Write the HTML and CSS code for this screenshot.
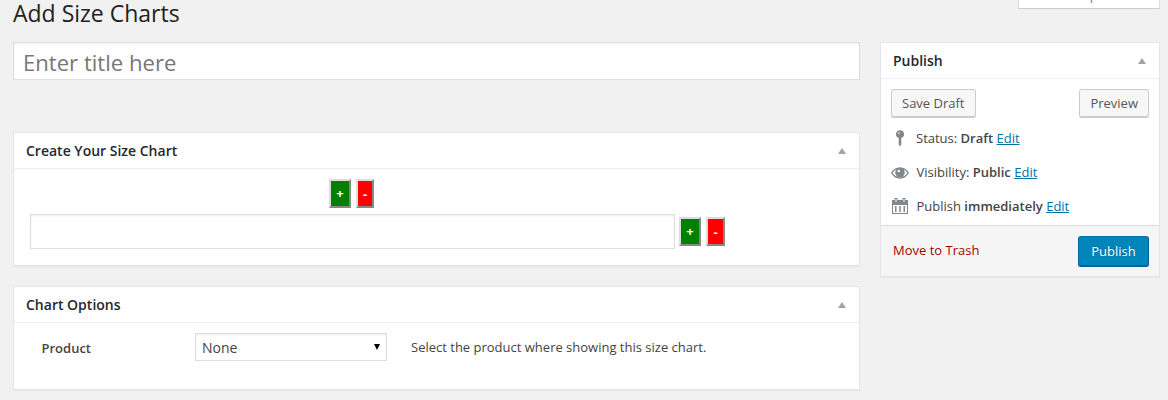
FILE: index.html
```html
<!DOCTYPE html>
<html lang="en">
<head>
<meta charset="utf-8">
<title>Add Size Charts</title>
<link rel="stylesheet" href="styles.css">
</head>
<body>
<div class="page">
  <header class="topbar">
    <h1 class="page-title">Add Size Charts</h1>
    <button class="screen-options">Screen Options</button>
  </header>
  <div class="columns">
    <main class="main">
      <input class="title-input" type="text" placeholder="Enter title here">
      <section class="postbox chart-box">
        <h3 class="postbox-title">Create Your Size Chart<span class="toggle"></span></h3>
        <div class="chart-body">
          <div class="col-actions">
            <button class="cell-btn add">+</button>
            <button class="cell-btn remove">-</button>
          </div>
          <div class="chart-row">
            <input class="cell-input" type="text">
            <button class="cell-btn add">+</button>
            <button class="cell-btn remove wide">-</button>
          </div>
        </div>
      </section>
      <section class="postbox options-box">
        <h3 class="postbox-title">Chart Options<span class="toggle"></span></h3>
        <div class="option-row">
          <span class="option-label">Product</span>
          <div class="select">None<span class="select-arrow"></span></div>
          <span class="option-help">Select the product where showing this size chart.</span>
        </div>
      </section>
    </main>
    <aside class="postbox publish-box">
      <h3 class="postbox-title">Publish<span class="toggle"></span></h3>
      <div class="minor-actions">
        <button class="button">Save Draft</button>
        <button class="button">Preview</button>
      </div>
      <ul class="misc">
        <li class="misc-item">
          <svg class="misc-icon" width="18" height="18" viewBox="0 0 18 18"><path fill="#82878c" d="M9 1.200a4 4 0 0 1 1.300 7.800V15.500L9 17.500l-1.300-2V9A4 4 0 0 1 9 1.200z"/><ellipse cx="7.800" cy="4" rx="1.300" ry="1" fill="#c3c6c9"/></svg>
          <span>Status: <b>Draft</b> <a href="#">Edit</a></span>
        </li>
        <li class="misc-item shifted">
          <svg class="misc-icon" width="18" height="18" viewBox="0 0 18 18"><path fill="#82878c" fill-rule="evenodd" d="M0 10C2 6.500 5.200 4.300 9 4.300s7 2.200 9 5.700c-2 3.500-5.200 5.700-9 5.700S2 13.500 0 10zM1.600 10c1.200 2.300 3.800 4 7.400 4s6.200-1.700 7.400-4C15.500 8.400 14.200 7.200 12.800 6.500c.6 1 1 2 1 3a4.800 4.800 0 0 1-9.600 0c0-1 .4-2 1-3C3.800 7.200 2.500 8.400 1.600 10z"/><circle cx="7.800" cy="8" r="1.300" fill="#fff"/></svg>
          <span>Visibility: <b>Public</b> <a href="#">Edit</a></span>
        </li>
        <li class="misc-item shifted">
          <svg class="misc-icon" width="18" height="18" viewBox="0 0 18 18"><path fill="#82878c" fill-rule="evenodd" d="M1 3h16v14H1zM2 8v8h14V8z"/><path fill="#82878c" d="M3.500 1h3v4h-3zM11.500 1h3v4h-3zM4 9h1.500v6H4zM8.200 9h1.500v6H8.200zM12.500 9H14v6h-1.500z"/><path fill="#fff" d="M4.500 2h1v3h-1zM12.500 2h1v3h-1z"/></svg>
          <span>Publish <b>immediately</b> <a href="#">Edit</a></span>
        </li>
      </ul>
      <div class="major-actions">
        <a class="trash" href="#">Move to Trash</a>
        <button class="button primary">Publish</button>
      </div>
    </aside>
  </div>
</div>
</body>
</html>
```
FILE: styles.css
```css
* { box-sizing: border-box; }
body { margin: 0; background: #f1f1f1; color: #444; font: 13px/18px "Open Sans", sans-serif; overflow: hidden; }
button, input { font-family: inherit; margin: 0; }
.page { height: 400px; padding: 0 8px 0 13px; overflow: hidden; }
.topbar { display: flex; justify-content: space-between; align-items: flex-start; height: 42px; }
.page-title { margin: 0; font-size: 23px; font-weight: 400; line-height: 26px; color: #222; }
.screen-options { width: 142px; height: 28px; margin-top: -19px; padding: 0 16px; background: #fff; border: 1px solid #ddd; border-bottom-color: #ccc; font-size: 13px; line-height: 22px; color: #777; text-align: left; }
.columns { display: grid; grid-template-columns: 847px 280px; gap: 20px; align-items: start; }
.title-input { display: block; width: 100%; height: 38px; margin-bottom: 52px; padding: 4px 9px 2px; border: 1px solid #ddd; box-shadow: inset 0 1px 2px rgba(0,0,0,.07); font-size: 22.100px; line-height: 30px; color: #32373c; }
.title-input::placeholder { color: #777; }
.postbox { background: #fff; border: 1px solid #e5e5e5; box-shadow: 0 1px 1px rgba(0,0,0,.04); }
.postbox-title { display: flex; justify-content: space-between; align-items: center; height: 36px; margin: 0; padding: 0 13.500px 0 12px; border-bottom: 1px solid #eee; font-size: 14px; font-weight: 600; color: #23282d; }
.toggle { border: 4px solid transparent; border-top: 0; border-bottom: 6px solid #a0a5aa; }
.chart-box { height: 134px; margin-bottom: 20px; }
.chart-body { padding: 10px 16px; }
.col-actions { display: flex; gap: 5px; padding-left: 299px; margin-bottom: 6px; }
.chart-row { display: flex; align-items: center; gap: 5px; }
.cell-input { width: 645px; height: 35px; margin-right: -1px; border: 1px solid #ddd; box-shadow: inset 0 1px 2px rgba(0,0,0,.07); }
.cell-btn { width: 22px; height: 29px; padding: 0 0 2px; border: 2px solid; border-color: #ddd #888 #888 #ddd; color: #fff; font-size: 13px; font-weight: 700; }
.add { background: #008000; }
.remove { width: 18px; padding-bottom: 0; background: #f00; }
.wide { width: 19px; }
.options-box { height: 104px; }
.option-row { display: flex; padding: 10px 28px 10px 27.500px; line-height: 28px; }
.option-label { width: 153.500px; padding-top: 1px; font-weight: 600; }
.select { display: flex; justify-content: space-between; align-items: center; width: 192px; height: 28px; padding: 1px 6px 0; border: 1px solid #ddd; box-shadow: inset 0 1px 2px rgba(0,0,0,.07); font-size: 14px; }
.select-arrow { border: 3.500px solid transparent; border-top: 6px solid #000; border-bottom: 0; margin-top: -2px; }
.option-help { margin-left: 24px; }
.publish-box { height: 235px; }
.minor-actions { display: flex; justify-content: space-between; padding: 10px 10px 0; }
.button { height: 29px; padding: 0 10px 1px; border: 1px solid #ccc; border-bottom-width: 2px; border-radius: 3px; background: #f7f7f7; color: #555; font-size: 13px; line-height: 26px; }
.misc { list-style: none; margin: 0; padding: 3px 10px 2px; }
.misc-item { display: flex; align-items: center; gap: 7px; height: 34px; }
.shifted { gap: 7.500px; }
a { color: #0073aa; }
b { font-weight: 600; }
.major-actions { display: flex; justify-content: space-between; align-items: center; height: 51px; padding: 0 10px 0 12px; border-top: 1px solid #ddd; background: #f5f5f5; }
.trash { padding-bottom: 2px; color: #a00; text-decoration: none; }
.primary { width: 71px; height: 31px; padding: 1px 0 0; background: #0085ba; border-color: #0073aa #006799 #006799; border-bottom-width: 2px; color: #fff; text-shadow: 0 -1px 1px #006799; }
```
